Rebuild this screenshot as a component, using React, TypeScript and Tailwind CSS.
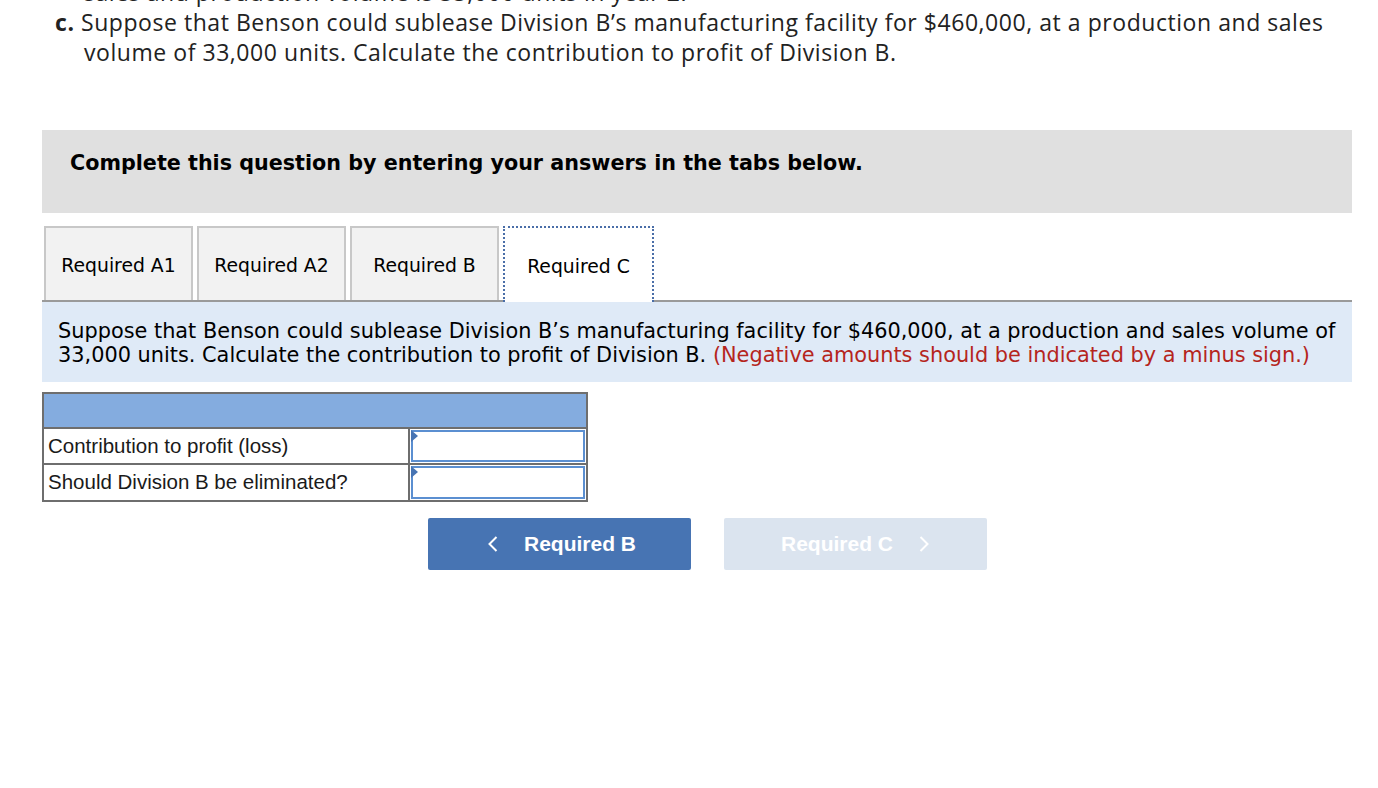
const tabs = ["Required A1", "Required A2", "Required B", "Required C"];

function Chevron({ dir }: { dir: "left" | "right" }) {
  return (
    <svg width="10" height="16" viewBox="0 0 10 16" className="shrink-0">
      <polyline
        points={dir === "left" ? "8.5,1 1.5,8 8.5,15" : "1.5,1 8.5,8 1.5,15"}
        fill="none"
        stroke="white"
        strokeWidth="2"
      />
    </svg>
  );
}

export default function App() {
  return (
    <main className="w-[1378px] h-[788px] bg-white overflow-hidden">
      {/* question text, first line belongs to previous part and is cut off */}
      <div
        className="-mt-[23px] text-[23px] leading-[30px] tracking-[0.55px] text-[#222]"
        style={{ fontFamily: '"Open Sans", sans-serif' }}
      >
        <div className="pl-[84px]">sales and production volume is 33,000 units in year 2.</div>
        <div className="pl-[55px]">
          <span className="font-bold">c.</span> Suppose that Benson could sublease Division B’s manufacturing facility for $460,000, at a production and sales
        </div>
        <div className="pl-[84px]">volume of 33,000 units. Calculate the contribution to profit of Division B.</div>
      </div>

      <div className="ml-[42px] w-[1310px] mt-[63px]">
        {/* instruction box */}
        <div
          className="h-[83px] bg-[#e0e0e0] pl-[28px] pt-[21px] text-[20.7px] leading-[24px] font-bold text-black"
          style={{ fontFamily: '"DejaVu Sans", Verdana, sans-serif' }}
        >
          Complete this question by entering your answers in the tabs below.
        </div>

        {/* tabs */}
        <div
          className="mt-[14px] flex items-end border-b-2 border-[#9a9a9a] h-[75px] pl-[2px] gap-[4px]"
          style={{ fontFamily: '"DejaVu Sans", Verdana, sans-serif' }}
        >
          {tabs.map((t, i) =>
            i === 3 ? (
              <div
                key={t}
                className="-mb-[2px] h-[76px] w-[151px] bg-white border-2 border-b-0 border-dotted border-[#4a6ea8] flex items-center justify-center pt-[4px] text-[18.8px] text-black"
              >
                {t}
              </div>
            ) : (
              <div
                key={t}
                className="h-[74px] w-[149px] bg-[#f2f2f2] border-2 border-b-0 border-[#c8c8c8] flex items-center justify-center pt-[4px] text-[18.8px] text-black"
              >
                {t}
              </div>
            )
          )}
        </div>

        {/* panel */}
        <div
          className="h-[80px] bg-[#dfeaf7] pl-[16px] pr-[8px] pt-[17px] text-[20.85px] leading-[24px] text-black"
          style={{ fontFamily: '"DejaVu Sans", Verdana, sans-serif' }}
        >
          Suppose that Benson could sublease Division B’s manufacturing facility for $460,000, at a production and sales volume of 33,000 units. Calculate the contribution to profit of Division B.{" "}
          <span className="text-[#b5251d]">(Negative amounts should be indicated by a minus sign.)</span>
        </div>

        {/* table */}
        <div
          className="mt-[10px] w-[546px] border-2 border-[#6e6e6e] text-[20.5px] text-[#1a1a1a]"
          style={{ fontFamily: '"Liberation Sans", Arial, sans-serif' }}
        >
          <div className="h-[35px] bg-[#84acdf] border-b-2 border-[#6e6e6e]" />
          {["Contribution to profit (loss)", "Should Division B be eliminated?"].map((label, i) => (
            <div key={label} className={i === 0 ? "flex h-[36px] border-b-2 border-[#6e6e6e]" : "flex h-[35px]"}>
              <div className="w-[366px] border-r-2 border-[#6e6e6e] flex items-center pl-[4px]">{label}</div>
              <div className="flex-1 p-[1px] relative">
                <div className="h-full border-2 border-[#5b8fd1] bg-white" />
                <div className="absolute top-[1px] left-[1px] w-0 h-0 border-t-[6px] border-b-[6px] border-l-[7px] border-t-transparent border-b-transparent border-l-[#4774b3]" />
              </div>
            </div>
          ))}
        </div>

        {/* nav buttons */}
        <div className="flex mt-[16px] pl-[386px] gap-[33px]" style={{ fontFamily: '"Liberation Sans", Arial, sans-serif' }}>
          <button className="w-[263px] h-[52px] bg-[#4774b3] rounded-[2px] text-white font-bold text-[21px] flex items-center pl-[60px] gap-[26px]">
            <Chevron dir="left" />
            <span>Required B</span>
          </button>
          <button className="w-[263px] h-[52px] bg-[#dbe4ef] rounded-[2px] text-white font-bold text-[21px] flex items-center pl-[57px] gap-[26px]">
            <span>Required C</span>
            <Chevron dir="right" />
          </button>
        </div>
      </div>
    </main>
  );
}
